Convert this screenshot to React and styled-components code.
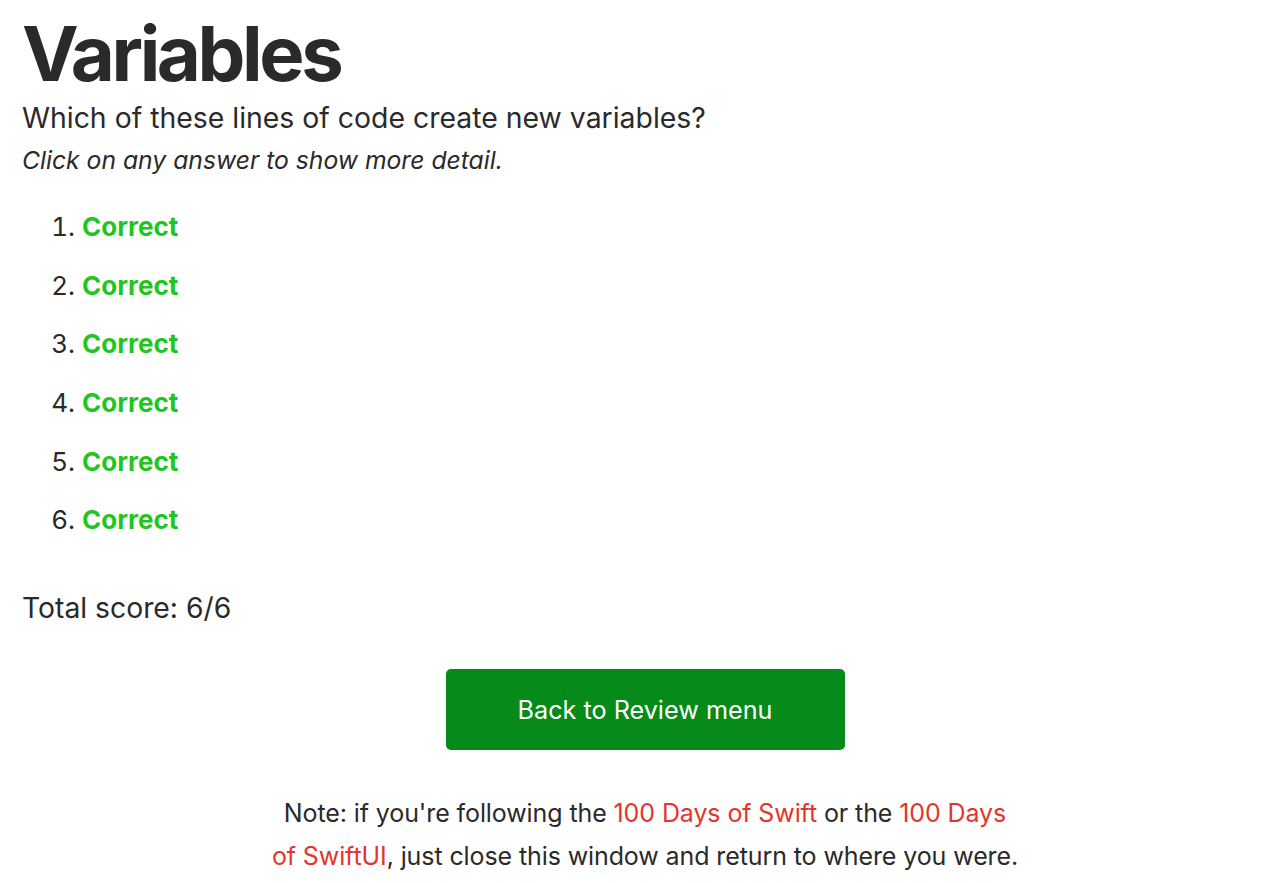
import styled, { createGlobalStyle } from "styled-components";

const GlobalStyle = createGlobalStyle`
  body {
    margin: 0;
    background: #ffffff;
    color: #2a2a2a;
    font-family: Inter, "Noto Sans", sans-serif;
  }
`;

const Page = styled.main`
  padding: 8px 12px 0 22px;
`;

const Title = styled.h1`
  margin: 0;
  font-size: 76px;
  line-height: 90px;
  font-weight: 700;
  letter-spacing: -3.4px;
`;

const Question = styled.p`
  margin: 0;
  font-size: 28.4px;
  line-height: 40px;
`;

const Hint = styled.p`
  margin: 0;
  font-size: 24.7px;
  line-height: 44px;
  font-style: italic;
`;

const Answers = styled.ol`
  margin: 25px 0 0;
  padding-left: 60px;
  font-size: 26px;
`;

const Answer = styled.li`
  height: 58.7px;
  line-height: 40px;
`;

const Verdict = styled.span`
  color: #1fc61f;
  font-weight: 700;
  cursor: pointer;
`;

const Score = styled.p`
  margin: 29px 0 0;
  font-size: 28.3px;
  line-height: 40px;
`;

const Actions = styled.div`
  display: flex;
  justify-content: center;
  margin-top: 41px;
`;

const BackButton = styled.button`
  width: 399px;
  height: 81px;
  border: none;
  border-radius: 5px;
  background: #068a19;
  color: #ffffff;
  font-family: inherit;
  font-size: 25.2px;
  cursor: pointer;
`;

const Note = styled.p`
  max-width: 748px;
  margin: 42px auto 0;
  text-align: center;
  font-size: 25px;
  line-height: 43px;
  letter-spacing: -0.1px;
`;

const Link = styled.a`
  color: #e5342b;
  text-decoration: none;
`;

const answers = [1, 2, 3, 4, 5, 6];

export default function App() {
  return (
    <>
      <GlobalStyle />
      <Page>
        <Title>Variables</Title>
        <Question>Which of these lines of code create new variables?</Question>
        <Hint>Click on any answer to show more detail.</Hint>
        <Answers>
          {answers.map((n) => (
            <Answer key={n}>
              <Verdict>Correct</Verdict>
            </Answer>
          ))}
        </Answers>
        <Score>Total score: 6/6</Score>
        <Actions>
          <BackButton>Back to Review menu</BackButton>
        </Actions>
        <Note>
          Note: if you're following the <Link href="#">100 Days of Swift</Link> or the{" "}
          <Link href="#">100 Days of SwiftUI</Link>, just close this window and return to where
          you were.
        </Note>
      </Page>
    </>
  );
}
